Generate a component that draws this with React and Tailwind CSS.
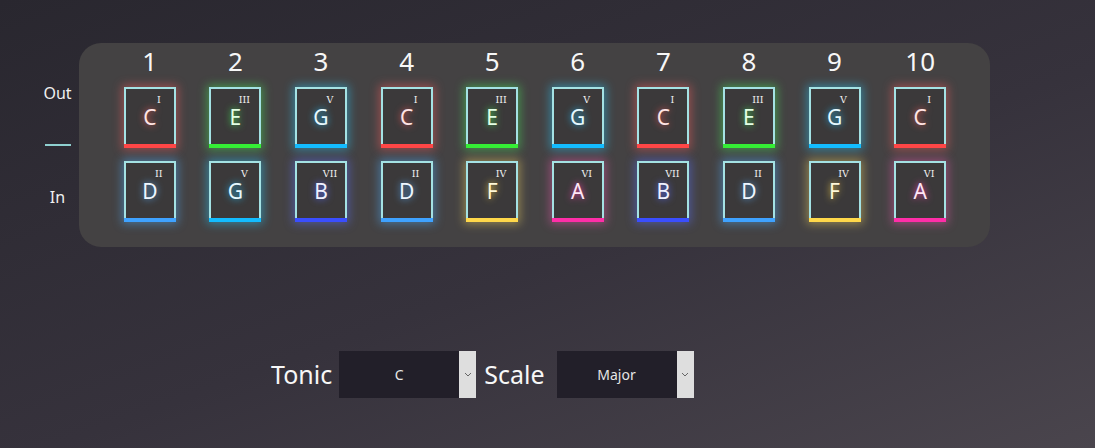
import React from "react";

// degree -> look of the pad (bar colour, glow, letter tint)
const DEGREE = {
  I: {
    bar: "bg-[#ff4646]",
    glow: "shadow-[0_0_9px_2px_rgba(255,95,95,0.45)]",
    text: "text-[#ffe4e4] [text-shadow:0_0_7px_#ff5a5a]",
  },
  II: {
    bar: "bg-[#3fa2ff]",
    glow: "shadow-[0_0_9px_2px_rgba(80,175,255,0.45)]",
    text: "text-[#eef6ff] [text-shadow:0_0_7px_#5ab0ff]",
  },
  III: {
    bar: "bg-[#35ee35]",
    glow: "shadow-[0_0_9px_2px_rgba(70,240,90,0.45)]",
    text: "text-[#e4ffe4] [text-shadow:0_0_7px_#44ee55]",
  },
  IV: {
    bar: "bg-[#ffd84a]",
    glow: "shadow-[0_0_9px_2px_rgba(255,225,100,0.42)]",
    text: "text-[#fff8d8] [text-shadow:0_0_7px_#ffd84a]",
  },
  V: {
    bar: "bg-[#13bcff]",
    glow: "shadow-[0_0_9px_2px_rgba(40,205,255,0.45)]",
    text: "text-[#e6f9ff] [text-shadow:0_0_7px_#22c4ff]",
  },
  VI: {
    bar: "bg-[#ff2ea8]",
    glow: "shadow-[0_0_9px_2px_rgba(255,90,185,0.42)]",
    text: "text-[#ffe6f6] [text-shadow:0_0_7px_#ff44b4]",
  },
  VII: {
    bar: "bg-[#3a4eff]",
    glow: "shadow-[0_0_9px_2px_rgba(90,110,255,0.45)]",
    text: "text-[#eef0ff] [text-shadow:0_0_7px_#5a6cff]",
  },
};

const outRow = [
  ["C", "I"], ["E", "III"], ["G", "V"], ["C", "I"], ["E", "III"],
  ["G", "V"], ["C", "I"], ["E", "III"], ["G", "V"], ["C", "I"],
];
const inRow = [
  ["D", "II"], ["G", "V"], ["B", "VII"], ["D", "II"], ["F", "IV"],
  ["A", "VI"], ["B", "VII"], ["D", "II"], ["F", "IV"], ["A", "VI"],
];

function Pad({ note, degree }) {
  const d = DEGREE[degree];
  return (
    <div
      className={`relative w-[52px] h-[61px] border-2 border-b-0 border-[#a4e2e4] bg-[#3b393a] flex flex-col ${d.glow}`}
    >
      <span className="absolute top-[6px] right-[4px] w-[22px] text-center text-[9.5px] leading-none text-[#f2f2f2] font-['DejaVu_Serif',serif]">
        {degree}
      </span>
      <div className={`flex-1 flex items-center justify-center pt-[1px] text-[21px] leading-none ${d.text}`}>
        {note}
      </div>
      <div className={`h-[4px] -mx-[2px] ${d.bar}`} />
    </div>
  );
}

function FakeSelect({ value }) {
  return (
    <div className="flex h-[47px]">
      <div className="w-[120px] bg-[#221f29] flex items-center justify-center text-[14px] text-[#e6e6e6]">
        {value}
      </div>
      <div className="w-[17px] bg-[#dedede] flex items-center justify-center">
        <svg width="8" height="5" viewBox="0 0 8 5">
          <path d="M1 1 L4 4 L7 1" fill="none" stroke="#666" strokeWidth="1" />
        </svg>
      </div>
    </div>
  );
}

export default function App() {
  return (
    <div className="w-[1095px] h-[448px] overflow-hidden bg-[linear-gradient(160deg,#29272f_0%,#36323c_55%,#4a454d_100%)] text-white font-['Noto_Sans','Open_Sans',sans-serif]">
      <div className="flex pt-[43px]">
        <div className="w-[79px] h-[204px] pl-[36px] flex flex-col items-center justify-center gap-[34px] text-[16px] text-[#f0f0f0]">
          <span className="leading-[18px]">Out</span>
          <span className="w-[26px] h-[2px] bg-[#8fd0d0] my-[8px]" />
          <span className="leading-[18px]">In</span>
        </div>

        <div className="w-[911px] h-[204px] rounded-[22px] bg-[#444243] pl-[28px] pt-[2px]">
          <div className="grid grid-cols-[repeat(10,85.6px)]">
            {outRow.map((_, i) => (
              <div key={i} className="h-[32px] flex items-center justify-center text-[26px] leading-none text-[#f7f7f7]">
                {i + 1}
              </div>
            ))}
          </div>
          <div className="grid grid-cols-[repeat(10,85.6px)] mt-[10px]">
            {outRow.map(([n, d], i) => (
              <div key={i} className="flex justify-center">
                <Pad note={n} degree={d} />
              </div>
            ))}
          </div>
          <div className="grid grid-cols-[repeat(10,85.6px)] mt-[13px]">
            {inRow.map(([n, d], i) => (
              <div key={i} className="flex justify-center">
                <Pad note={n} degree={d} />
              </div>
            ))}
          </div>
        </div>
      </div>

      <div className="flex items-center mt-[104px] pl-[271px] text-[25px] text-[#f7f7f7]">
        <span className="mr-[7px] leading-none">Tonic</span>
        <FakeSelect value="C" />
        <span className="ml-[8px] mr-[12px] leading-none">Scale</span>
        <FakeSelect value="Major" />
      </div>
    </div>
  );
}
